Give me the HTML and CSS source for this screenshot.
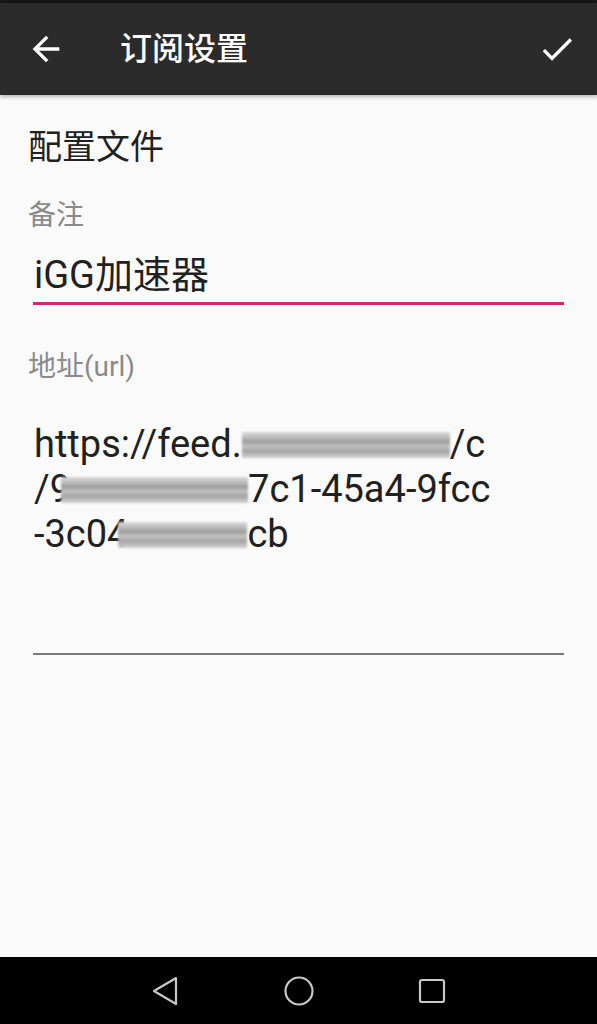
FILE: index.html
```html
<!DOCTYPE html>
<html>
<head>
<meta charset="utf-8">
<link rel="stylesheet" href="styles.css">
</head>
<body>
<div class="screen">
  <div class="status"></div>
  <header class="appbar">
    <svg class="icon-back" viewBox="0 0 24 24" width="40" height="40"><path fill="#fff" d="M20 11H7.83l5.59-5.59L12 4l-8 8 8 8 1.41-1.41L7.83 13H20v-2z"/></svg>
    <div class="title">订阅设置</div>
    <svg class="icon-check" viewBox="0 0 24 24" width="40" height="40"><path fill="#fff" d="M9 16.17L4.83 12l-1.42 1.41L9 19 21 7l-1.41-1.41z"/></svg>
  </header>
  <main class="content">
    <div class="section-title">配置文件</div>
    <div class="label">备注</div>
    <div class="field focused"><span class="value">iGG加速器</span></div>
    <div class="label label-url">地址(url)</div>
    <div class="field multiline">
      <div class="value url">https://feed.<span class="redact r1"></span>/c<br>/9<span class="redact r2"></span>7c1-45a4-9fcc<br>-3c04<span class="redact r3"></span>cb</div>
    </div>
  </main>
  <nav class="navbar">
    <svg class="nav-icon" viewBox="0 0 40 40" width="40" height="40"><path d="M30 7 L8 20 L30 33 Z" fill="none" stroke="#c8c8c8" stroke-width="2.2" stroke-linejoin="round"/></svg>
    <svg class="nav-icon" viewBox="0 0 40 40" width="40" height="40"><circle cx="20" cy="20" r="13.5" fill="none" stroke="#c8c8c8" stroke-width="2.2"/></svg>
    <svg class="nav-icon" viewBox="0 0 40 40" width="40" height="40"><rect x="8" y="9" width="24" height="22" rx="2" fill="none" stroke="#c8c8c8" stroke-width="2.2"/></svg>
  </nav>
</div>
</body>
</html>
```

FILE: styles.css
```css
html, body {
  margin: 0;
  padding: 0;
}
body {
  width: 597px;
  height: 1024px;
  overflow: hidden;
  background: #fafafa;
  font-family: Roboto, "Noto Sans CJK SC", sans-serif;
}
.screen {
  display: flex;
  flex-direction: column;
  height: 1024px;
}
.status {
  height: 3px;
  background: #161616;
  flex: none;
}
.appbar {
  height: 92px;
  flex: none;
  background: #2b2b2b;
  display: flex;
  align-items: center;
  padding: 0 20px 0 26px;
  box-shadow: 0 2px 4px rgba(0,0,0,0.28);
  position: relative;
  z-index: 1;
}
.icon-back, .icon-check {
  flex: none;
  display: block;
}
.title {
  margin-left: 54px;
  color: #fff;
  font-size: 32px;
  font-weight: 500;
  flex: 1;
  line-height: 40px;
}
.content {
  flex: 1;
  padding: 0 33px 0 28px;
}
.section-title {
  margin-top: 32px;
  font-size: 34px;
  line-height: 40px;
  color: #212121;
}
.label {
  margin-top: 32px;
  font-size: 28px;
  line-height: 34px;
  color: #8a8a8a;
}
.field {
  margin-left: 5px;
  padding-left: 1px;
  margin-top: 20px;
  border-bottom: 2px solid #7a7a7a;
}
.field.focused {
  border-bottom: 3px solid #d4266a;
  padding-bottom: 4px;
}
.value {
  font-size: 38px;
  line-height: 45px;
  color: #212121;
}
.label-url {
  margin-top: 45px;
}
.field.multiline {
  margin-top: 38px;
  padding-bottom: 96px;
}
.url {
  display: block;
}
.redact {
  display: inline-block;
  height: 26px;
  vertical-align: -1px;
  background: linear-gradient(to bottom, #dcdcdc 0%, #bdbdbd 20%, #9c9c9c 38%, #c4c4c4 55%, #a4a4a4 72%, #d2d2d2 100%);
  filter: blur(1.2px);
}
.r1 { width: 208px; }
.r2 { width: 187px; margin-left: -10px; }
.r3 { width: 129px; margin-left: -10px; }
.navbar {
  height: 67px;
  flex: none;
  background: #000;
  display: flex;
  justify-content: center;
  align-items: center;
  gap: 93px;
}
.nav-icon {
  display: block;
}
```
